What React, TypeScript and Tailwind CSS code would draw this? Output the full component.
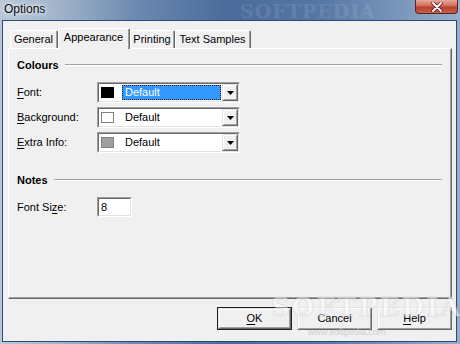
import React from "react";

function U({ children }: { children: React.ReactNode }) {
  return <span className="underline decoration-1 underline-offset-[2px]">{children}</span>;
}

function Sunken({ className, children }: { className?: string; children?: React.ReactNode }) {
  return (
    <div className={"border border-t-[#a0a0a0] border-l-[#a0a0a0] border-r-white border-b-white " + (className ?? "")}>
      <div className="w-full h-full border border-t-[#696969] border-l-[#696969] border-r-[#e3e3e3] border-b-[#e3e3e3] bg-white flex items-center">
        {children}
      </div>
    </div>
  );
}

function Raised({ className, children }: { className?: string; children?: React.ReactNode }) {
  return (
    <div className={"border border-t-[#e3e3e3] border-l-[#e3e3e3] border-r-[#696969] border-b-[#696969] " + (className ?? "")}>
      <div className="w-full h-full border border-t-white border-l-white border-r-[#a0a0a0] border-b-[#a0a0a0] bg-[#f0f0f0] flex items-center justify-center">
        {children}
      </div>
    </div>
  );
}

function Heading({ text }: { text: string }) {
  return (
    <div className="h-[14px] flex items-center gap-[6px] leading-[14px]">
      <span className="font-bold">{text}</span>
      <div className="flex-1 h-[2px] border-t border-t-[#a0a0a0] border-b border-b-white" />
    </div>
  );
}

function Combo({ swatch, swatchBorder, selected }: { swatch: string; swatchBorder: string; selected?: boolean }) {
  return (
    <Sunken className="w-[143px] h-[21px]">
      <div
        className="ml-[2px] w-[13px] h-[11px] border shrink-0"
        style={{ backgroundColor: swatch, borderColor: swatchBorder }}
      />
      <div className="flex-1 flex items-center pl-[8px] pr-[1px]">
        {selected ? (
          <div className="flex-1 h-[15px] bg-[#3399ff] border border-dotted border-[#1a1a1a] pl-[2px] text-white leading-[13px]">
            Default
          </div>
        ) : (
          <div className="flex-1 h-[15px] pl-[3px] leading-[15px]">Default</div>
        )}
      </div>
      <Raised className="w-[16px] h-full shrink-0">
        <svg width="7" height="4" viewBox="0 0 7 4">
          <path d="M0 0H7L3.5 4Z" fill="#000" />
        </svg>
      </Raised>
    </Sunken>
  );
}

function Row({ label, children }: { label: React.ReactNode; children: React.ReactNode }) {
  return (
    <div className="flex items-center h-[21px]">
      <div className="w-[80px]">{label}</div>
      {children}
    </div>
  );
}

function Tab({ label, w, selected }: { label: string; w: number; selected?: boolean }) {
  return (
    <div
      className={
        "border-t border-l border-white border-r border-r-[#696969] rounded-t-[2px] bg-[#f0f0f0] " +
        (selected ? "h-[21px] -mb-[1px] relative z-10" : "h-[18px]")
      }
      style={{ width: w }}
    >
      <div className="w-full h-full border-r border-r-[#a0a0a0] pt-[2px] text-center leading-[13px]">{label}</div>
    </div>
  );
}

function Button({ children, isDefault }: { children: React.ReactNode; isDefault?: boolean }) {
  return (
    <div className={"w-[75px] h-[23px] " + (isDefault ? "border border-[#202020]" : "")}>
      <Raised className="w-full h-full">
        <span className="leading-[13px]">{children}</span>
      </Raised>
    </div>
  );
}

export default function App() {
  return (
    <div className="w-[460px] h-[344px] relative overflow-hidden flex flex-col bg-[linear-gradient(90deg,#b9c7d8_0%,#a3b5cb_12%,#6b88b1_30%,#4a6a9a_50%,#5676a4_70%,#7d98bd_88%,#97aecb_100%)] font-['Liberation_Sans',Arial,sans-serif] text-[11px] text-black">
      {/* title bar */}
      <div className="h-[21px] shrink-0 relative">
        <span className="absolute left-[4px] top-[2px] text-[12px] leading-[14px] text-[#0b0b0b] [text-shadow:0_0_5px_#e8eef6,0_0_3px_#e8eef6,0_0_8px_#d0dbe8]">
          Options
        </span>
        <span className="absolute left-[240px] top-[1px] text-[19px] leading-[20px] font-bold tracking-[1px] font-['DejaVu_Serif',serif] text-white/10">
          SOFTPEDIA
        </span>
        <div className="absolute right-[2px] top-0 w-[43px] h-[14px] rounded-b-[4px] border border-t-0 border-[#5a2520] bg-[linear-gradient(180deg,#e8a99c_0%,#d06a58_45%,#b8402e_55%,#c8604c_100%)] flex items-center justify-center">
          <svg width="12" height="10" viewBox="0 0 12 10">
            <path d="M2 1L10 9M10 1L2 9" stroke="#4a1a14" strokeWidth="3.4" strokeLinecap="round" />
            <path d="M2 1L10 9M10 1L2 9" stroke="#ffffff" strokeWidth="1.8" strokeLinecap="round" />
          </svg>
        </div>
      </div>

      {/* client area */}
      <div className="flex-1 ml-[3px] mr-[4px] mb-[3px] bg-[#f0f0f0] flex flex-col pl-[5px] pr-[4px] pt-[6px] shadow-[0_0_0_1px_#2c4a78]">
        {/* tabs */}
        <div className="h-[21px] flex items-end pl-[2px] shrink-0">
          <Tab label="General" w={48} />
          <Tab label="Appearance" w={72} selected />
          <Tab label="Printing" w={45} />
          <Tab label="Text Samples" w={76} />
        </div>

        {/* panel */}
        <div className="h-[251px] shrink-0 border-t border-l border-white border-r border-b border-r-[#696969] border-b-[#696969]">
          <div className="w-full h-full border-r border-b border-r-[#a0a0a0] border-b-[#a0a0a0] pl-[8px] pr-[8px] pt-[9px] flex flex-col">
            <Heading text="Colours" />
            <div className="mt-[10px] flex flex-col gap-[4px]">
              <Row label={<><U>F</U>ont:</>}>
                <Combo swatch="#000000" swatchBorder="#000000" selected />
              </Row>
              <Row label={<><U>B</U>ackground:</>}>
                <Combo swatch="#ffffff" swatchBorder="#808080" />
              </Row>
              <Row label={<><U>E</U>xtra Info:</>}>
                <Combo swatch="#a0a0a0" swatchBorder="#808080" />
              </Row>
            </div>
            <div className="mt-[20px]">
              <Heading text="Notes" />
            </div>
            <div className="mt-[10px] flex items-center h-[20px]">
              <div className="w-[80px]">
                Font Si<U>z</U>e:
              </div>
              <Sunken className="w-[35px] h-[20px]">
                <span className="pl-[2px] leading-[13px]">8</span>
              </Sunken>
            </div>
          </div>
        </div>

        {/* buttons */}
        <div className="mt-[8px] flex justify-end gap-[5px] relative">
          <Button isDefault>
            <U>O</U>K
          </Button>
          <Button>Cancel</Button>
          <Button>
            <U>H</U>elp
          </Button>
          <span className="absolute left-[263px] -top-[14px] text-[26px] leading-[28px] font-bold tracking-[2px] font-['DejaVu_Serif',serif] text-white/50 pointer-events-none [-webkit-text-stroke:1px_rgba(180,180,180,0.3)]">
            SOFTPEDIA
          </span>
          <span className="absolute left-[300px] top-[20px] text-[9px] leading-[10px] text-[#cfcfcf] pointer-events-none">
            www.softpedia.com
          </span>
        </div>
      </div>
    </div>
  );
}
